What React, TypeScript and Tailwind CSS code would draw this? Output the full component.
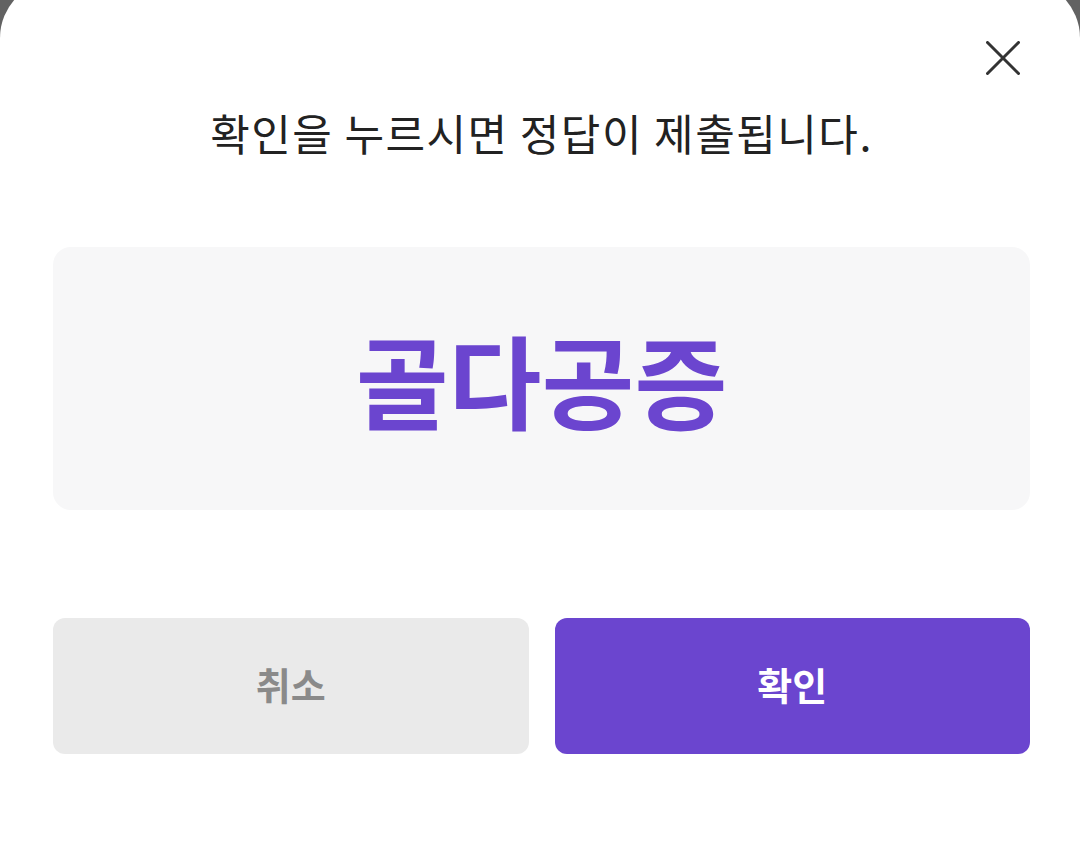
import { useState } from 'react';

const FONT = { fontFamily: '"Noto Sans CJK KR", "Noto Sans", sans-serif' };

export default function App() {
  const [open, setOpen] = useState(true);

  return (
    <div className="w-[1080px] h-[857px] bg-[#626262] overflow-hidden" style={FONT}>
      <div className="relative -mt-[20px] h-[877px] bg-white rounded-t-[58px] flex flex-col pl-[53px] pr-[50px] pt-[124px]">
        <button
          type="button"
          aria-label="닫기"
          onClick={() => setOpen(!open)}
          className="absolute top-[61px] right-[60px] w-[34px] h-[34px]"
        >
          <svg viewBox="0 0 34 34" className="w-full h-full" fill="none" stroke="#333333" strokeWidth="3" strokeLinecap="round">
            <path d="M1.5 1.5 L32.5 32.5 M32.5 1.5 L1.5 32.5" />
          </svg>
        </button>

        <h2 className="text-center text-[43px] leading-[56px] tracking-[1.5px] font-normal text-[#222222]">
          확인을 누르시면 정답이 제출됩니다.
        </h2>

        <div className="mt-[87px] h-[263px] rounded-[18px] bg-[#f7f7f8] flex items-center justify-center">
          <span className="text-[101px] leading-none font-bold text-[#6b45cf]">골다공증</span>
        </div>

        <div className="mt-[108px] grid grid-cols-2 gap-[26px]">
          <button
            type="button"
            className="h-[136px] rounded-[12px] bg-[#eaeaea] text-[38px] font-bold text-[#8a8a8a] pb-[6px]"
          >
            취소
          </button>
          <button
            type="button"
            className="h-[136px] rounded-[12px] bg-[#6b45cf] text-[38px] font-bold text-white pb-[6px]"
          >
            확인
          </button>
        </div>
      </div>
    </div>
  );
}
